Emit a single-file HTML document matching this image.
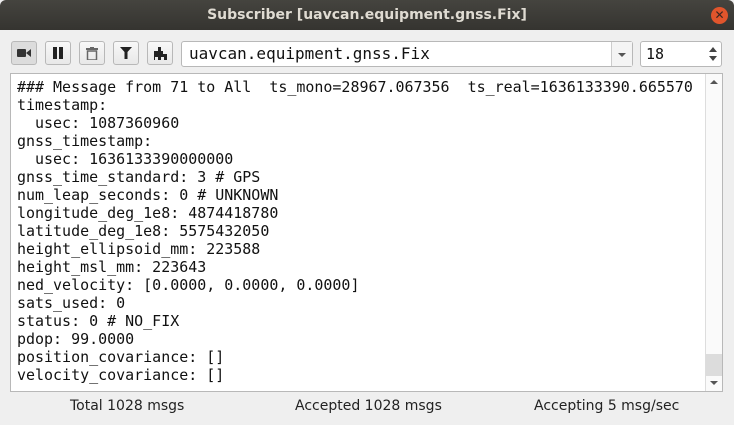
<!DOCTYPE html><html><head><style>
body{margin:0;width:734px;height:425px;background:#efefef;font-family:"DejaVu Sans","Liberation Sans",sans-serif;position:relative;overflow:hidden}
.title{position:absolute;left:0;top:0;width:734px;height:30px;background:linear-gradient(#45443f,#353430);border-radius:6px 6px 0 0;color:#dfdbd2;font-weight:bold;font-size:14px;text-align:center;line-height:31px}
.close{position:absolute;right:6px;top:7px;width:17px;height:17px;border-radius:50%;background:#e0552c;color:#3a2520;font-size:12px;line-height:17px;text-align:center}
.btn{position:absolute;top:41px;width:26px;height:24px;border:1px solid #b8b8b8;border-radius:3px;background:linear-gradient(#f8f8f8,#e8e8e8);box-sizing:border-box;display:flex;align-items:center;justify-content:center}
.btn.on{background:#dcdcdc}
.combo{position:absolute;left:181px;top:41px;width:452px;height:26px;border:1px solid #b8b8b8;border-radius:3px;background:#fff;box-sizing:border-box;font-family:"DejaVu Sans Mono",monospace;font-size:16px;line-height:24px;padding-left:7px;color:#111}
.combo .dd{position:absolute;right:0;top:0;width:20px;height:24px;border-left:1px solid #ccc;background:#f4f4f4}
.spin{position:absolute;left:640px;top:41px;width:82px;height:26px;border:1px solid #b8b8b8;border-radius:3px;background:#fff;box-sizing:border-box;font-family:"DejaVu Sans Mono",monospace;font-size:15px;line-height:24px;padding-left:5px;color:#111}
.text{position:absolute;left:10px;top:73px;width:713px;height:319px;border:1px solid #b8b8b8;background:#fff;box-sizing:border-box}
pre{margin:0;position:absolute;left:6px;top:4px;font-family:"DejaVu Sans Mono",monospace;font-size:14.97px;line-height:18px;color:#111}
.sb{position:absolute;right:0;top:0;width:16px;height:317px;border-left:1px solid #ddd;background:#fafafa}
.status{position:absolute;top:398px;font-size:14px;color:#222}
</style></head><body>
<div class="title">Subscriber [uavcan.equipment.gnss.Fix]<div class="close">✕</div></div>
<div class="btn on" style="left:11px"><svg width="14" height="12"><rect x="0" y="2" width="9" height="8" rx="1" fill="#333"/><path d="M9 6 L14 2 V10Z" fill="#333"/></svg></div>
<div class="btn" style="left:45px"><svg width="12" height="12"><rect x="1" y="0" width="4" height="12" fill="#222"/><rect x="7" y="0" width="4" height="12" fill="#222"/></svg></div>
<div class="btn" style="left:79px"><svg width="12" height="13"><rect x="0" y="1" width="12" height="2" fill="#666"/><rect x="4" y="0" width="4" height="2" fill="#666"/><rect x="1.5" y="4" width="9" height="9" fill="none" stroke="#666" stroke-width="1.5"/></svg></div>
<div class="btn" style="left:113px"><svg width="12" height="12"><path d="M0 0H12L7.5 5V12H4.5V5Z" fill="#222"/></svg></div>
<div class="btn" style="left:147px"><svg width="13" height="13"><path d="M4 0H7V4H9V7H13V13H10V10H7V13H4V10H1V13H0V4H4Z" fill="#222"/></svg></div>
<div class="combo">uavcan.equipment.gnss.Fix<div class="dd"><svg width="20" height="24"><path d="M6 11H14L10 15Z" fill="#555"/></svg></div></div>
<div class="spin">18<svg style="position:absolute;right:3px;top:3px" width="10" height="18"><path d="M1 7H9L5 2Z M1 11H9L5 16Z" fill="#444"/></svg></div>
<div class="text"><pre>### Message from 71 to All  ts_mono=28967.067356  ts_real=1636133390.665570
timestamp:
  usec: 1087360960
gnss_timestamp:
  usec: 1636133390000000
gnss_time_standard: 3 # GPS
num_leap_seconds: 0 # UNKNOWN
longitude_deg_1e8: 4874418780
latitude_deg_1e8: 5575432050
height_ellipsoid_mm: 223588
height_msl_mm: 223643
ned_velocity: [0.0000, 0.0000, 0.0000]
sats_used: 0
status: 0 # NO_FIX
pdop: 99.0000
position_covariance: []
velocity_covariance: []</pre>
<div class="sb"><svg style="position:absolute;left:3px;top:4px" width="10" height="8"><path d="M1 6H9L5 2Z" fill="#555"/></svg><div style="position:absolute;left:0;top:280px;width:16px;height:22px;background:#dcdcdc"></div><svg style="position:absolute;left:3px;top:305px" width="10" height="8"><path d="M1 2H9L5 6Z" fill="#555"/></svg></div></div>
<div class="status" style="left:70px">Total 1028 msgs</div>
<div class="status" style="left:295px">Accepted 1028 msgs</div>
<div class="status" style="left:534px">Accepting 5 msg/sec</div>
</body></html>
